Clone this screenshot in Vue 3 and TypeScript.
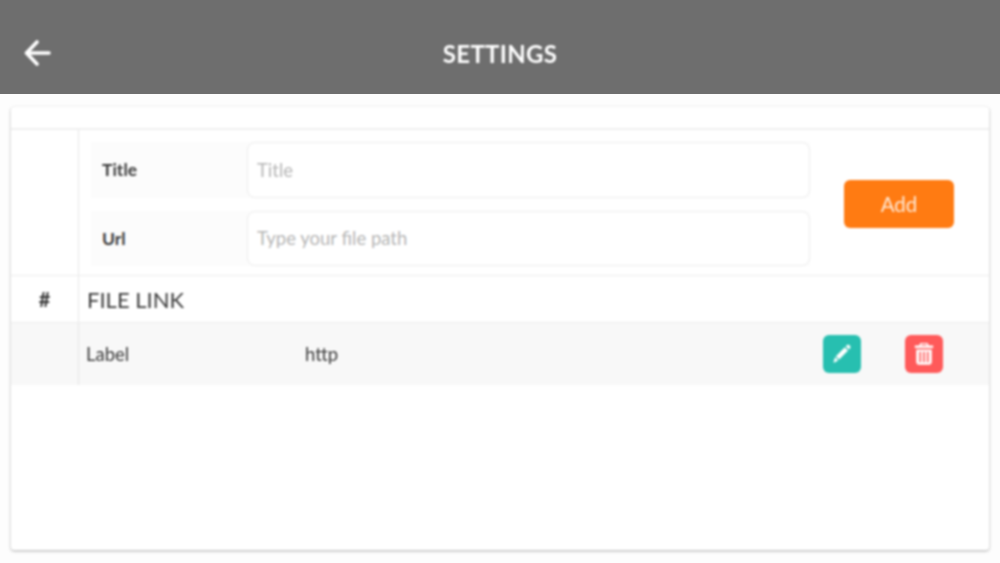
<script setup lang="ts">
import { ref } from 'vue';

interface FileLink {
  label: string;
  url: string;
}

const links = ref<FileLink[]>([{ label: 'Label', url: 'http' }]);
</script>

<template>
  <div class="settings">
    <header class="settings__bar">
      <button type="button" class="settings__back" aria-label="Back">
        <svg width="30" height="30" viewBox="0 0 30 30" fill="none" stroke="#fff" stroke-width="3.6" stroke-linecap="round" stroke-linejoin="round">
          <path d="M4 15h22" />
          <path d="M14 4 3.500 15 14 26" />
        </svg>
      </button>
      <h1 class="settings__title">SETTINGS</h1>
    </header>

    <main class="settings__body">
      <section class="card">
        <div class="card__top"></div>

        <div class="row row--form">
          <div class="row__index"></div>
          <div class="add-form">
            <div class="add-form__fields">
              <label class="field">
                <span class="field__label">Title</span>
                <input class="field__input" type="text" placeholder="Title" />
              </label>
              <label class="field">
                <span class="field__label">Url</span>
                <input class="field__input" type="text" placeholder="Type your file path" />
              </label>
            </div>
            <div class="add-form__action">
              <button type="button" class="add-btn">Add</button>
            </div>
          </div>
        </div>

        <div class="row row--head">
          <div class="row__index">#</div>
          <div class="row__heading">FILE LINK</div>
        </div>

        <div v-for="link in links" :key="link.label" class="row row--item">
          <div class="row__index"></div>
          <div class="item">
            <span class="item__label">{{ link.label }}</span>
            <span class="item__url">{{ link.url }}</span>
            <button type="button" class="icon-btn icon-btn--edit" aria-label="Edit">
              <svg width="22" height="22" viewBox="0 0 22 22" fill="#fff">
                <path d="M15.800 2.200c.9-.7 2.200-.6 3 .2s.9 2.100.2 3l-1 1.200-3.300-3.300z" />
                <path d="M13.800 4.300l3.300 3.300-8.900 9-3.300-3.300z" />
                <path d="M4.200 14.100l3.100 3.100-3.700 2.200c-.7.300-1.300-.3-1-1z" />
              </svg>
            </button>
            <button type="button" class="icon-btn icon-btn--delete" aria-label="Delete">
              <svg width="22" height="24" viewBox="0 0 24 26" fill="#fff">
                <path fill-rule="evenodd" d="M8 1h8l1.200 2.600H22v2.900H2V3.600h4.800zM9.300 2.400l-.5 1.200h6.400l-.5-1.200z" />
                <path fill-rule="evenodd" d="M3.500 8h17v13.500c0 1.900-1.100 3.200-2.600 3.200H6.100c-1.500 0-2.600-1.300-2.600-3.200zM7 10.500v11.500h1.800V10.500zM11.100 10.500v11.500h1.800V10.500zM15.200 10.500v11.500H17V10.500z" />
              </svg>
            </button>
          </div>
        </div>
      </section>
    </main>
  </div>
</template>

<style>
html,
body {
  margin: 0;
  background: #fdfdfd;
}
</style>

<style scoped>
.settings {
  display: flex;
  flex-direction: column;
  width: 1000px;
  height: 563px;
  overflow: hidden;
  background: #fdfdfd;
  color: #3a3a3a;
  font-family: Lato, "Noto Sans", sans-serif;
}

.settings__bar {
  display: flex;
  flex: 0 0 94px;
  align-items: center;
  justify-content: center;
  position: relative;
  background: #6e6e6e;
}

.settings__back {
  position: absolute;
  left: 23px;
  top: 38px;
  width: 30px;
  height: 30px;
  padding: 0;
  border: 0;
  background: transparent;
  filter: blur(0.8px);
}

.settings__title {
  margin: 12px 0 0;
  color: #fff;
  font-size: 24px;
  font-weight: 700;
  letter-spacing: 0.3px;
  filter: blur(0.8px);
}

.settings__body {
  flex: 1;
  padding: 13px 11px;
}

.card {
  height: 443px;
  border-radius: 3px;
  background: #fff;
  box-shadow: 0 1px 3px rgba(0, 0, 0, 0.32);
  filter: blur(0.8px);
}

.card__top {
  height: 21px;
  border-bottom: 2px solid #efefef;
}

.row {
  display: flex;
  border-bottom: 1px solid #ececec;
}

.row__index {
  display: flex;
  flex: 0 0 67px;
  align-items: center;
  justify-content: center;
  border-right: 1px solid #e6e6e6;
  font-size: 20px;
  font-weight: 700;
}

.row--form {
  height: 145px;
}

.add-form {
  display: flex;
  flex: 1;
  padding: 12px 0 9px 12px;
}

.add-form__fields {
  display: flex;
  flex-direction: column;
  gap: 13px;
  width: 719px;
}

.field {
  display: flex;
  flex: 0 0 55.500px;
  background: #fcfcfc;
}

.field__label {
  display: flex;
  flex: 0 0 156px;
  align-items: center;
  padding-left: 11px;
  box-sizing: border-box;
  font-size: 17.500px;
  font-weight: 700;
}

.field__input {
  flex: 1;
  min-width: 0;
  padding: 0 9px;
  border: 1px solid #ececec;
  border-radius: 8px;
  outline: 0;
  background: #fff;
  font-family: inherit;
  font-size: 18.500px;
}

.field__input::placeholder {
  color: #b5b5b5;
}

.add-form__action {
  display: flex;
  flex: 1;
  align-items: center;
  justify-content: flex-start;
  padding-left: 34px;
}

.add-btn {
  width: 110px;
  height: 48px;
  border: 0;
  border-radius: 6px;
  background: #ff7b12;
  color: #ffe9d6;
  font-family: inherit;
  font-size: 20.500px;
}

.row--head {
  height: 46px;
}

.row__heading {
  display: flex;
  align-items: center;
  padding-left: 8px;
  font-size: 22px;
}

.row--item {
  height: 62px;
  border-bottom: 0;
  background: #f8f8f8;
}

.item {
  display: flex;
  flex: 1;
  align-items: center;
  padding-left: 7px;
  font-size: 18.500px;
}

.item__label {
  flex: 0 0 219px;
}

.item__url {
  flex: 0 0 518px;
}

.icon-btn {
  display: flex;
  flex: 0 0 38px;
  align-items: center;
  justify-content: center;
  height: 38px;
  padding: 0;
  border: 0;
  border-radius: 6px;
}

.icon-btn--edit {
  background: #27bfb0;
}

.icon-btn--delete {
  margin-left: 44px;
  background: #ff5a5a;
}
</style>
